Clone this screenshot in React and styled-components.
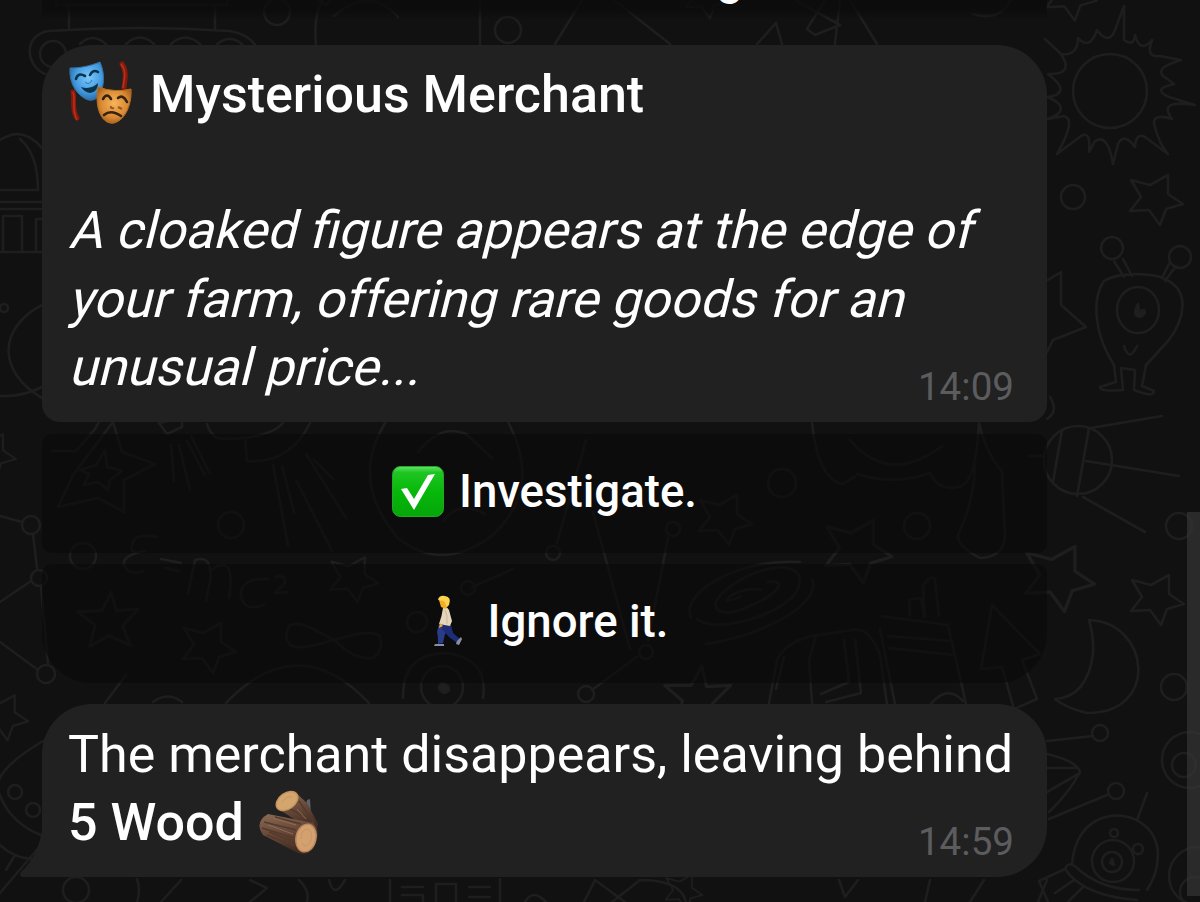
import React from "react";
import styled, { createGlobalStyle } from "styled-components";

const GlobalStyle = createGlobalStyle`
  * { box-sizing: border-box; }
  body { margin: 0; background: #111111; overflow: hidden; }
`;

const Screen = styled.main`
  position: relative;
  isolation: isolate;
  width: 1200px;
  height: 902px;
  overflow: hidden;
  background: #111111;
  color: #ffffff;
  font-family: Roboto, "Liberation Sans", sans-serif;
`;

const Wallpaper = styled.svg`
  position: absolute;
  inset: 0;
  z-index: -1;
  fill: none;
  stroke: #1e1e1e;
  stroke-width: 2.6;
  stroke-linecap: round;
  stroke-linejoin: round;
`;

const Thread = styled.div`
  display: flex;
  flex-direction: column;
  width: 1005px;
  margin-left: 42px;
`;

const PreviousButton = styled.div`
  display: flex;
  align-items: flex-end;
  justify-content: flex-end;
  height: 20px;
  margin-bottom: 25px;
  padding: 0 304px 20px 0;
  background: linear-gradient(#0b0b0bd0, #0b0b0bc0 50%, #0b0b0b00);
  font-size: 46px;
  font-weight: 500;
  line-height: 42px;
`;

const Bubble = styled.section`
  position: relative;
  display: flex;
  flex-direction: column;
  height: ${(p) => p.$height}px;
  padding: ${(p) => p.$top}px 33px 0 ${(p) => p.$left}px;
  border-radius: ${(p) => p.$radius};
  background: #212121;
`;

const Line = styled.p`
  display: flex;
  align-items: center;
  height: 68.5px;
  margin: 0;
  font-size: 52px;
  line-height: 68.5px;
  white-space: pre;
  font-weight: ${(p) => (p.$strong ? 500 : 400)};
`;

const SlantedLine = styled(Line)`
  margin-left: -2px;
  transform: skewX(-14deg);
  transform-origin: 0 52px;
`;

const Blank = styled.div`
  height: 67.5px;
`;

const Time = styled.time`
  position: absolute;
  right: 33px;
  bottom: 12px;
  color: #5c5c5e;
  font-size: 38.6px;
  line-height: 46px;
`;

const Actions = styled.div`
  display: flex;
  flex-direction: column;
  gap: 11px;
  margin: 12px 0 21.5px;
`;

const Action = styled.button`
  display: flex;
  align-items: center;
  justify-content: center;
  gap: 15px;
  height: 119px;
  padding: 0 0 2px;
  border: 0;
  border-radius: ${(p) => (p.$last ? "10px 10px 50px 50px" : "10px")};
  background: rgba(11, 11, 11, 0.65);
  color: inherit;
  font: 500 45.6px/60px Roboto, "Liberation Sans", sans-serif;
`;

const Tail = styled.svg`
  position: absolute;
  left: -22px;
  bottom: 0;
  fill: #212121;
`;

const Icon = styled.svg`
  flex: none;
  display: block;
  margin: ${(p) => p.$margin || "0"};
`;

function Masks() {
  return (
    <Icon width="64" height="66" viewBox="0 0 64 66" $margin="-4px 17px 0 -1px">
      <defs>
        <radialGradient id="blue" cx=".55" cy=".4" r=".65">
          <stop offset="0" stopColor="#7cc8fb" />
          <stop offset=".6" stopColor="#439be0" />
          <stop offset="1" stopColor="#28639f" />
        </radialGradient>
        <radialGradient id="gold" cx=".5" cy=".45" r=".65">
          <stop offset="0" stopColor="#f6b45a" />
          <stop offset=".6" stopColor="#d98a32" />
          <stop offset="1" stopColor="#965216" />
        </radialGradient>
      </defs>
      <g fill="none" stroke="#861a0d" strokeWidth="5" strokeLinecap="round">
        <path d="M4 32C6 40 2 49 8 58" />
        <path d="M53 4C58 11 56 19 55 28" />
      </g>
      <g fill="none" stroke="#bd301b" strokeWidth="1.5">
        <path d="M4 32C7 40 2 49 8 60" />
        <path d="M52 4C58 11 55 20 54 28" />
      </g>
      <path d="M1 8C11 8 21 6 31 2C35 11 36 22 32 32C28 41 21 42 15 38C5 32 0 20 1 8Z" fill="url(#blue)" stroke="#37719f" />
      <g fill="none" stroke="#08354e" strokeWidth="2.6" strokeLinecap="round">
        <path d="M7 19Q9 12 16 16" />
        <path d="M21 15Q24 9 29 12" />
      </g>
      <path d="M12 27Q22 30 29 23Q29 32 21 33Q15 32 12 27Z" fill="#07344b" />
      <path d="M16 22Q20 26 23 20" fill="none" stroke="#2878b7" />
      <path d="M29 27Q46 33 62 29C63 43 57 60 45 63C34 65 25 50 29 27Z" fill="url(#gold)" stroke="#b66d22" />
      <g fill="none" stroke="#342212" strokeWidth="2.6" strokeLinecap="round">
        <path d="M34 39Q38 32 42 39" />
        <path d="M49 38Q54 34 58 42" />
        <path d="M35 55Q42 49 52 56" />
      </g>
      <path d="M42 46Q41 49 45 48M49 47L53 49" fill="none" stroke="#96581b" strokeWidth="2" />
    </Icon>
  );
}

function Check() {
  return (
    <Icon width="52" height="51" viewBox="0 0 52 51" $margin="-2px 0 0 0">
      <defs>
        <linearGradient id="green" x1="0" y1="0" x2="0" y2="1">
          <stop offset="0" stopColor="#62e368" />
          <stop offset=".12" stopColor="#1fc522" />
          <stop offset=".5" stopColor="#06b909" />
          <stop offset="1" stopColor="#05a509" />
        </linearGradient>
      </defs>
      <rect x=".5" y=".5" width="51" height="50" rx="8" fill="url(#green)" stroke="#27a52b" />
      <path d="M9 23L15 22L22 33L36 9L43 8L22 44Z" fill="#ffffff" />
    </Icon>
  );
}

function Walker() {
  return (
    <Icon width="52" height="52" viewBox="0 0 52 52" $margin="-2px 0 0 0">
      <path d="M18 29L30 30Q28 37 24 39L22 48L17 49Q17 40 16 37Z" fill="#293b89" />
      <path d="M20 30L30 30L32 38L39 44L36 48L28 42L21 34Z" fill="#1e2d77" />
      <path d="M22 13Q26 11 28 15L31 26L29 31L18 29Q21 21 22 13Z" fill="#e4d6b8" />
      <path d="M24 15Q27 20 26 29" stroke="#c7b99a" fill="none" />
      <path d="M19 28L18 33L22 31Z" fill="#f0ad2b" />
      <path d="M18 5L20 12L25 14L28 8L26 3L21 2Z" fill="#f1ae27" />
      <path d="M17 5Q18 0 24 1Q31 2 28 10L26 12L23 6Z" fill="#ffd24d" />
      <path d="M14 49H23V51H13ZM36 46L40 42L41 44L38 50L35 49Z" fill="#8b8fa0" />
    </Icon>
  );
}

function Wood() {
  return (
    <Icon width="62" height="66" viewBox="0 0 62 66" $margin="-3px 0 0 14px">
      <defs>
        <linearGradient id="bark" x1="0" y1="0" x2=".3" y2="1">
          <stop offset="0" stopColor="#8c6b54" />
          <stop offset=".4" stopColor="#6f5040" />
          <stop offset="1" stopColor="#442c21" />
        </linearGradient>
      </defs>
      <path d="M47 22L49 11L52 10L53 27Z" fill="#626165" />
      <path d="M36 2L49 14L60 35L58 43L42 34L19 19Z" fill="url(#bark)" />
      <path d="M10 25L55 34Q64 43 55 60Q48 68 38 63L5 46Q-4 33 10 25Z" fill="url(#bark)" />
      <path d="M6 33L38 41M4 39L36 49M9 46L37 57M32 20L48 28M41 12L56 34M17 28L43 35M11 43L34 52" stroke="#553a2c" fill="none" strokeWidth="1.4" />
      <path d="M15 29L38 36M10 36L35 45M39 20L48 30" stroke="#8f6b52" fill="none" />
      <ellipse cx="29" cy="12" rx="12" ry="8" transform="rotate(-36 29 12)" fill="#d4a66e" stroke="#c4945f" strokeWidth="1.4" />
      <ellipse cx="48" cy="49" rx="10" ry="14" transform="rotate(12 48 49)" fill="#d3a06f" stroke="#bb8760" strokeWidth="1.4" />
      <path d="M43 50Q43 40 50 40Q56 43 52 54Q47 60 44 54M24 13Q30 6 34 8" fill="none" stroke="#c99567" />
    </Icon>
  );
}

const STAR = "M-5 -8L4 -24L8 -7L28 -8L13 7L19 25L0 15L-18 24L-12 5L-27 -8Z";
const POINTED_STAR = "M-24 -17L-5 -12L13 -22L13 -3L28 7L11 12L5 28L-6 13L-25 14L-14 0Z";
const stars = [
  [1155, 197, 1], [1156, 597, 1], [1058, 575, 1.3],
  [208, 645, 1], [353, 577, 0.9],
  [724, 517, 1], [857, 548, 1.25],
  [3, 715, 0.9], [683, 890, 0.7], [-8, 453, 0.85],
  [1070, -6, 0.95], [706, -4, 0.8],
];
const uprightStars = [[108, 619, 1.1, -3], [697, 695, 1.2, 0]];
const rings = [
  [277, 12, 13], [508, 30, 13], [1073, 197, 12], [1179, 526, 13],
  [1174, 687, 13], [83, 556, 13], [231, 525, 13], [782, 483, 14],
  [917, 526, 13], [76, 890, 13], [15, 792, 7], [33, 810, 7],
  [31, 525, 9], [39, 578, 8], [46, 674, 9], [586, 694, 8],
  [468, 588, 7], [553, 553, 7], [673, 529, 7], [646, 652, 7],
  [1100, 733, 8], [1116, 791, 8], [417, 622, 10], [4, 308, 4],
];

function Doodles() {
  return (
    <Wallpaper width="1200" height="902" viewBox="0 0 1200 902" aria-hidden="true">
      {stars.map(([x, y, s]) => (
        <path key={`${x}-${y}`} d={POINTED_STAR} transform={`translate(${x} ${y}) scale(${s})`} />
      ))}
      {uprightStars.map(([x, y, s, r]) => (
        <path key={`${x}-${y}`} d={STAR} transform={`translate(${x} ${y}) rotate(${r}) scale(${s})`} />
      ))}
      {rings.map(([x, y, r]) => <circle key={`${x}-${y}`} cx={x} cy={y} r={r} />)}
      {/* ancient column and temple */}
      <path d="M56 0V5H227V0M69 6V28M215 6V28M45 74C24 65 24 34 49 31Q140 25 230 31Q248 34 256 46M80 44Q92 32 106 44M126 44Q140 31 154 44M171 44Q185 31 200 44M217 44Q230 34 242 44" />
      <circle cx="53" cy="54" r="13" />
      <path d="M0 140Q23 125 42 148M20 139Q38 154 38 190H0M0 202H42M0 209H42M3 216H22V252H3ZM36 252V219H42M0 252H42M42 305C-5 330 0 374 42 398M0 396Q22 397 42 387" />
      {/* sun */}
      <circle cx="1110" cy="91" r="37" />
      <path d="M1045 39L1061 54Q1078 56 1078 38Q1090 51 1097 30Q1109 46 1115 30L1124 6V40Q1134 47 1135 35Q1140 54 1152 40Q1145 58 1160 56L1181 60Q1151 69 1166 78L1174 84Q1151 89 1169 97L1195 105Q1157 99 1172 119Q1153 113 1154 124Q1159 144 1168 154L1145 137Q1136 132 1135 147Q1124 132 1118 144L1113 164Q1108 133 1095 141L1089 152Q1091 130 1081 136L1057 154Q1077 119 1064 116L1048 119Q1074 109 1048 97Q1073 93 1048 74Q1075 75 1061 54" />
      {/* alien */}
      <path d="M1104 281C1120 271 1156 273 1167 280C1190 292 1185 319 1168 341L1146 365L1142 386L1154 391Q1154 398 1134 390L1135 370L1121 368L1123 390Q1100 392 1100 387L1116 382L1114 365C1092 331 1093 296 1104 281ZM1123 259L1132 276M1114 261L1124 277M1170 262L1162 278M1176 266L1165 281M1124 346Q1129 363 1137 346" />
      <circle cx="1112" cy="248" r="11" /><circle cx="1180" cy="257" r="11" />
      <ellipse cx="1138" cy="310" rx="21" ry="23" />
      <path d="M1138 304Q1132 315 1139 317Q1147 315 1144 310L1139 312Z" fill="#202020" />
      <path d="M1048 280L1061 272V305L1086 327L1053 340L1047 352M1050 397Q1059 411 1047 419" />
      {/* top strip fragments */}
      <path d="M323 0Q313 15 316 44M318 0L326 5L330 0M334 16Q370-15 398 17M480 0V44M555 44L582 0M614 0L670 44M757 44L776 23L782 44M795 0L840 25L815 35L807 29L825 0M840 0L835 44M850 0L877 44M973 14Q1000 22 1011 0" />
      {/* satellite, crescent, constellation */}
      <circle cx="1078" cy="460" r="34" />
      <path d="M1062 430L1053 482M1089 428L1077 496M1091 428L1162 416M1086 461L1179 476M1083 497L1145 532M1030 456H1042M1089 620C1150 622 1160 714 1087 713Q1066 708 1055 699Q1087 697 1093 654Q1094 636 1089 620Z" />
      <path d="M0 516L22 522M33 534L37 568M0 602L31 581M41 587L48 664M0 642L38 670M105 703L126 675" />
      {/* stars, comets, formula and infinity */}
      <path d="M52 451L76 451L95 429L101 418M113 422L122 452L155 464L124 480V512L98 498L58 507L73 475ZM80 470L96 465L105 450L107 467L122 471L110 480L108 490L98 482L84 485L89 474Z" />
      <path d="M159 423L182 418V427L167 434ZM207 424Q212 440 226 439Q270 438 283 423M245 439L247 461Q290 464 310 423M171 445L174 482M179 445L190 490M187 441L205 475M191 436L210 474M273 465L288 545M282 466L294 512M296 480L332 551M306 454L346 518M314 460L333 479" />
      <path d="M157 537Q133 532 132 546Q129 555 145 551Q119 556 125 567Q130 576 143 571M161 559L181 563M165 568L179 571M188 594L195 560Q213 554 210 582L206 601M211 570Q236 552 229 598M268 579Q239 578 241 597Q245 612 264 605M276 577Q286 574 285 583L275 593L288 592M334 640C317 632 303 620 290 625Q282 638 292 646C306 650 323 642 334 640C352 635 370 629 380 636Q384 651 373 658C354 660 344 648 334 640Z" />
      {/* faint planet and lower circles */}
      <path d="M387 420Q348 480 398 538Q440 572 489 538Q545 491 507 420M418 452Q441 423 466 434L492 458M444 520Q459 500 485 514M586 440L557 543M593 512L630 649M668 538L648 641M638 656L592 690M472 587L513 569M403 698Q402 654 445 653Q489 658 483 698" />
      <circle cx="442" cy="687" r="21" />
      <path d="M442 683Q435 689 444 693Q451 692 448 686Z" fill="#202020" />
      <path d="M226 703Q298 628 369 703M153 702Q168 691 182 702" />
      {/* jester hat, droplet and galaxy */}
      <path d="M812 423Q818 479 842 484L855 477M850 440Q889 486 942 446M857 474Q894 486 930 473Q939 493 962 486Q976 479 979 423Q985 451 1002 472L1005 534Q1005 557 980 558Q957 546 958 535Q974 502 975 465" />
      <path d="M691 617C680 595 735 558 800 562M697 619C718 636 793 611 799 586C806 557 755 565 726 590C704 608 720 620 747 607C778 595 789 579 768 582M761 590C750 586 729 594 727 600Q733 601 741 596M706 644C754 638 823 606 812 579" />
      {/* chair, phone and arrow */}
      <path d="M769 703L777 660Q786 642 812 636L852 630Q869 626 880 655L887 704M776 689L784 657M812 703L809 660L816 636M844 640L849 682L821 694M855 640L861 693L826 702M880 629L895 704M881 616L948 625L966 704M888 636L950 641M889 648L954 655M925 617L923 586Q932 573 935 580L939 616M910 615L909 600L921 598L924 617M931 704Q947 684 963 701M981 669L992 605L1040 654L1022 660L1037 699L1014 709L1002 667Z" />
      {/* rocket and helmet */}
      <path d="M1047 741L1093 736M1047 754Q1077 761 1080 772Q1069 793 1049 812M1047 768L1077 768M1047 792L1080 773M1049 819L1107 795M1137 820L1147 793" />
      <path d="M1072 864C1076 812 1123 807 1144 825C1164 841 1160 870 1147 890M1065 869Q1068 861 1076 867Q1100 890 1139 890M1065 869Q1083 896 1137 900M1065 869L1039 881L1048 902M1055 893L1074 880M1068 902L1084 886" />
      <circle cx="1113" cy="861" r="21" /><circle cx="1112" cy="862" r="10" /><circle cx="1114" cy="833" r="4" /><circle cx="1138" cy="849" r="5" />
      <path d="M1112 859L1110 863L1114 865Z" />
      <circle cx="1190" cy="760" r="28" /><circle cx="1184" cy="765" r="12" /><circle cx="1198" cy="876" r="29" /><circle cx="1195" cy="892" r="15" />
      {/* lower left and bottom edge */}
      <path d="M43 741Q-6 770-2 790Q8 822 41 835M0 845Q14 858 31 859M6 870L15 855M0 893L40 846M137 879Q141 890 137 902M161 902L181 880M250 880L267 888L250 902M299 880Q310 890 307 902M329 880Q334 900 345 880M390 880V902M402 887H423M402 895H423V902M436 902V884H456V902M469 887H490M469 897H490M500 879V902M525 902Q533 888 546 902M584 902L595 880L625 902M612 902L640 880Q681 880 686 902M839 880L845 897L858 880M925 902L930 880M970 902L984 880M1038 902L1047 880" />
    </Wallpaper>
  );
}

const Scrollbar = styled.div`
  position: absolute;
  top: 512px;
  right: 0;
  width: 13px;
  height: 384px;
  background: rgba(54, 54, 54, 0.68);
`;

export default function App() {
  return (
    <Screen>
      <GlobalStyle />
      <Doodles />
      <Thread>
        <PreviousButton>g</PreviousButton>
        <Bubble $height={376.5} $top={16} $left={28} $radius="50px 50px 18px 18px">
          <Line $strong><Masks />Mysterious Merchant</Line>
          <Blank />
          <SlantedLine>A cloaked figure appears at the edge of</SlantedLine>
          <SlantedLine>your farm, offering rare goods for an</SlantedLine>
          <SlantedLine>unusual price...</SlantedLine>
          <Time>14:09</Time>
        </Bubble>
        <Actions>
          <Action><Check />Investigate.</Action>
          <Action $last><Walker />Ignore it.</Action>
        </Actions>
        <Bubble $height={173} $top={16.5} $left={26} $radius="50px 50px 50px 0">
          <Tail width="28" height="66" viewBox="0 0 28 66">
            <path d="M22 0H28V66H2Q-3 63 4 58Q19 42 22 18Z" />
          </Tail>
          <Line>The merchant disappears, leaving behind</Line>
          <Line $strong>5 Wood<Wood /></Line>
          <Time>14:59</Time>
        </Bubble>
      </Thread>
      <Scrollbar />
    </Screen>
  );
}
